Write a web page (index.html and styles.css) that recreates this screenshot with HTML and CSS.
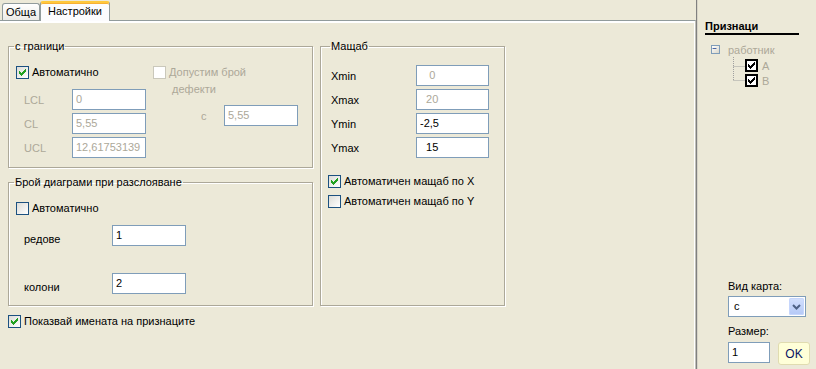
FILE: index.html
```html
<!DOCTYPE html>
<html lang="bg">
<head>
    <meta charset="UTF-8">
    <title>Настройки</title>
    <link rel="stylesheet" href="styles.css">
</head>
<body>
<div class="main">
    <div class="tab-strip">
        <div class="tab">Обща</div>
        <div class="tab active">Настройки</div>
    </div>
    <div class="page">
        <div class="settings">
            <fieldset class="group limits">
                <legend>с граници</legend>
                <div class="limits-body">
                    <div class="limits-col">
                        <label class="check">
                            <span class="cb"><svg viewBox="0 0 11 11"><path d="M8 2h1v1h-1zM7 3h2v1h-2zM2 4h1v1h-1zM6 4h3v1h-3zM2 5h2v1h-2zM5 5h3v1h-3zM2 6h5v1h-5zM3 7h3v1h-3zM4 8h1v1h-1z"/></svg></span>
                            Автоматично
                        </label>
                        <div class="field dim"><span class="lbl">LCL</span><input class="txt" value="0" readonly></div>
                        <div class="field dim"><span class="lbl">CL</span><input class="txt" value="5,55" readonly></div>
                        <div class="field dim"><span class="lbl">UCL</span><input class="txt" value="12,61753139" readonly></div>
                    </div>
                    <div class="defects-col">
                        <label class="check dim two-line">
                            <span class="cb off"></span>
                            <span>Допустим брой<br>&nbsp;дефекти</span>
                        </label>
                        <div class="field dim c-field"><span class="lbl">с</span><input class="txt" value="5,55" readonly></div>
                    </div>
                </div>
            </fieldset>

            <fieldset class="group scale">
                <legend>Мащаб</legend>
                <div class="field"><span class="lbl">Xmin</span><input class="txt dim" value="   0" readonly></div>
                <div class="field"><span class="lbl">Xmax</span><input class="txt dim" value="  20" readonly></div>
                <div class="field"><span class="lbl">Ymin</span><input class="txt" value="-2,5" readonly></div>
                <div class="field"><span class="lbl">Ymax</span><input class="txt" value="  15" readonly></div>
                <label class="check auto-x">
                    <span class="cb"><svg viewBox="0 0 11 11"><path d="M8 2h1v1h-1zM7 3h2v1h-2zM2 4h1v1h-1zM6 4h3v1h-3zM2 5h2v1h-2zM5 5h3v1h-3zM2 6h5v1h-5zM3 7h3v1h-3zM4 8h1v1h-1z"/></svg></span>
                    Автоматичен мащаб по X
                </label>
                <label class="check auto-y">
                    <span class="cb"></span>
                    Автоматичен мащаб по Y
                </label>
            </fieldset>

            <fieldset class="group split">
                <legend>Брой диаграми при разслояване</legend>
                <label class="check">
                    <span class="cb"></span>
                    Автоматично
                </label>
                <div class="field rows"><span class="lbl">редове</span><input class="txt" value="1" readonly></div>
                <div class="field cols"><span class="lbl">колони</span><input class="txt" value="2" readonly></div>
            </fieldset>

            <label class="check show-names">
                <span class="cb"><svg viewBox="0 0 11 11"><path d="M8 2h1v1h-1zM7 3h2v1h-2zM2 4h1v1h-1zM6 4h3v1h-3zM2 5h2v1h-2zM5 5h3v1h-3zM2 6h5v1h-5zM3 7h3v1h-3zM4 8h1v1h-1z"/></svg></span>
                Показвай имената на признаците
            </label>
        </div>
    </div>
</div>
<div class="splitter"></div>
<div class="side">
    <div class="side-title">Признаци</div>
    <div class="tree">
        <div class="tree-root">
            <span class="expander"><svg viewBox="0 0 9 9"><path d="M2 4h5v1h-5z"/></svg></span>
            <span class="tree-text">работник</span>
        </div>
        <div class="tree-children">
            <svg class="tree-lines" width="12" height="26" viewBox="0 0 12 26">
                <path d="M0.5 0V24M0.5 9.5H12M0.5 23.5H12" stroke="#a0a0a0" stroke-dasharray="1 1"/>
            </svg>
            <div class="tree-items">
                <div class="tree-item"><span class="tcb"><svg viewBox="0 0 9 9"><path d="M7 1h1v1h-1zM6 2h2v1h-2zM1 3h1v1h-1zM5 3h3v1h-3zM1 4h2v1h-2zM4 4h3v1h-3zM1 5h5v1h-5zM2 6h3v1h-3zM3 7h1v1h-1z"/></svg></span><span class="tree-text">A</span></div>
                <div class="tree-item"><span class="tcb"><svg viewBox="0 0 9 9"><path d="M7 1h1v1h-1zM6 2h2v1h-2zM1 3h1v1h-1zM5 3h3v1h-3zM1 4h2v1h-2zM4 4h3v1h-3zM1 5h5v1h-5zM2 6h3v1h-3zM3 7h1v1h-1z"/></svg></span><span class="tree-text">B</span></div>
            </div>
        </div>
    </div>
    <div class="map-opts">
        <div class="opt-label">Вид карта:</div>
        <div class="combo">
            <span class="combo-text">с</span>
            <span class="combo-btn"><svg viewBox="0 0 15 17"><path d="M4 7l3.5 3.5L11 7" fill="none" stroke="#4d6185" stroke-width="2"/></svg></span>
        </div>
        <div class="opt-label size-label">Размер:</div>
        <div class="size-row">
            <input class="txt size-input" value="1" readonly>
            <button class="ok-btn">OK</button>
        </div>
    </div>
</div>
</body>
</html>
```

FILE: styles.css
```css
body {
    margin: 0;
    height: 369px;
    overflow: hidden;
    display: flex;
    background-color: #ece9d8;
    font: 11px "Liberation Sans", Arial, sans-serif;
    color: #000;
}
.main {
    width: 696px;
    display: flex;
    flex-direction: column;
}
.tab-strip {
    height: 20px;
    display: flex;
    align-items: flex-end;
    padding-left: 2px;
}
.tab {
    height: 16px;
    line-height: 16px;
    padding: 0 3px;
    border: 1px solid #919b9c;
    border-bottom: none;
    border-radius: 3px 3px 0 0;
    background: linear-gradient(#ffffff, #ecebe6);
}
.tab.active {
    position: relative;
    z-index: 1;
    height: 18px;
    line-height: 17px;
    margin-bottom: -1px;
    padding: 0 7px;
    border-top: 2px solid #ffc83c;
    box-shadow: inset 0 1px 0 #f7b036;
    background: #fcfcfe;
}
.page {
    flex: 1;
    border-top: 1px solid #919b9c;
    border-right: 1px solid #c0c0b8;
    box-shadow: inset 0 2px 0 #fff, inset -1px 0 0 #fff;
    padding: 19px 0 0 8px;
}
.settings {
    display: grid;
    grid-template-columns: 305px 185px;
    grid-template-rows: 128px 130px auto;
    column-gap: 7px;
    row-gap: 8px;
}
.group {
    margin: 0;
    min-width: 0;
    border: 1px solid #aca899;
    box-shadow: 1px 1px 0 #fff, inset 1px 1px 0 #fff;
    padding: 13px 7px 9px;
}
.group legend {
    line-height: 13px;
    padding: 0 1px;
    margin-left: -2px;
}
.limits { grid-column: 1; grid-row: 1; }
.scale { grid-column: 2; grid-row: 1 / 3; padding-top: 12px; }
.scale legend { margin-left: 2px; }
.split { grid-column: 1; grid-row: 2; padding-bottom: 11px; }

.check {
    display: flex;
    align-items: center;
    height: 13px;
    line-height: 13px;
    white-space: nowrap;
}
.cb {
    width: 13px;
    height: 13px;
    box-sizing: border-box;
    border: 1px solid #1c5180;
    background: linear-gradient(135deg, #dcdcd7, #ffffff);
    margin-right: 3px;
    flex: none;
}
.cb svg {
    display: block;
    width: 11px;
    height: 11px;
    fill: #21a121;
    shape-rendering: crispEdges;
}
.cb.off {
    border-color: #cac8bb;
    background: #fff;
}
.dim { color: #aca899; }

.limits-body {
    display: flex;
}
.limits-col {
    width: 137px;
}
.limits-col .check {
    margin-bottom: 10px;
}
.field {
    display: flex;
    align-items: center;
    height: 21px;
    margin-bottom: 3px;
}
.field:last-child { margin-bottom: 0; }
.lbl {
    box-sizing: border-box;
    padding-left: 8px;
    width: 56px;
    flex: none;
}
.txt {
    box-sizing: border-box;
    width: 74px;
    height: 21px;
    border: 1px solid #7f9db9;
    background: #fff;
    padding: 0 3px 1px;
    font: inherit;
    color: #000;
    outline: none;
    white-space: pre;
}
.dim .txt, .txt.dim { color: #aca899; }

.two-line {
    align-items: flex-start;
    height: auto;
    line-height: 17px;
    margin-top: -2px;
}
.two-line .cb { margin-top: 2px; }
.c-field {
    margin-top: 7px;
}
.c-field .lbl {
    padding-left: 48px;
    width: 71px;
}

.scale .lbl {
    padding-left: 3px;
    width: 88px;
}
.scale .txt { width: 73px; }
.scale .field:nth-of-type(4) { margin-bottom: 0; }
.auto-x { margin-top: 17px; }
.auto-y { margin-top: 7px; }

.split .check { margin-bottom: 10px; }
.split .lbl {
    width: 96px;
    padding-top: 6px;
}
.split .cols { margin-top: 27px; }

.show-names {
    grid-column: 1;
    grid-row: 3;
    margin-top: 1px;
}

.splitter {
    width: 1px;
    background: #808080;
    box-shadow: 1px 0 0 #d8d5c8;
}
.side {
    flex: 1;
    display: flex;
    flex-direction: column;
    padding: 19px 0 4px 8px;
}
.side-title {
    width: 94px;
    font-weight: bold;
    line-height: 14px;
    border-bottom: 2px solid #000;
}
.tree {
    margin-top: 9px;
    color: #aca899;
}
.tree-root {
    display: flex;
    align-items: center;
    height: 11px;
}
.expander {
    width: 9px;
    height: 9px;
    box-sizing: border-box;
    margin-left: 6px;
    border: 1px solid #7f9db9;
    background: linear-gradient(135deg, #fff, #dad6c8);
}
.expander svg {
    display: block;
    width: 7px;
    height: 7px;
    margin: -1px;
    fill: #1c3f8f;
}
.tree-root .tree-text { margin-left: 8px; }
.tree-children {
    display: flex;
    margin: 2px 0 0 28px;
}
.tree-lines { flex: none; }
.tree-items { margin-top: 1px; }
.tree-item {
    display: flex;
    align-items: center;
    height: 15px;
}
.tcb {
    width: 13px;
    height: 13px;
    box-sizing: border-box;
    border: 2px solid #000;
    background: #fff;
    margin-right: 4px;
}
.tcb svg {
    display: block;
    width: 9px;
    height: 9px;
    fill: #000;
    shape-rendering: crispEdges;
}
.map-opts {
    margin-top: auto;
    margin-left: 23px;
}
.opt-label {
    line-height: 13px;
    margin-bottom: 3px;
}
.combo {
    width: 78px;
    height: 21px;
    box-sizing: border-box;
    border: 1px solid #7f9db9;
    background: #fff;
    display: flex;
}
.combo-text {
    flex: 1;
    padding-left: 5px;
    line-height: 19px;
}
.combo-btn {
    width: 15px;
    margin: 1px;
    border-radius: 2px;
    background: linear-gradient(#d3e0fd, #b4c8f6);
    box-shadow: inset 0 0 0 1px #c6d6fc;
}
.combo-btn svg {
    display: block;
    width: 15px;
    height: 17px;
}
.size-label {
    margin-top: 8px;
    margin-bottom: 4px;
}
.size-row {
    display: flex;
    align-items: flex-start;
}
.size-input {
    width: 42px;
}
.ok-btn {
    margin-left: 8px;
    width: 32px;
    height: 23px;
    border: 1px solid #e0dcb0;
    border-radius: 3px;
    background: #ffffd8;
    font: inherit;
    font-size: 12px;
    color: #0a1464;
    padding: 0;
}
```
